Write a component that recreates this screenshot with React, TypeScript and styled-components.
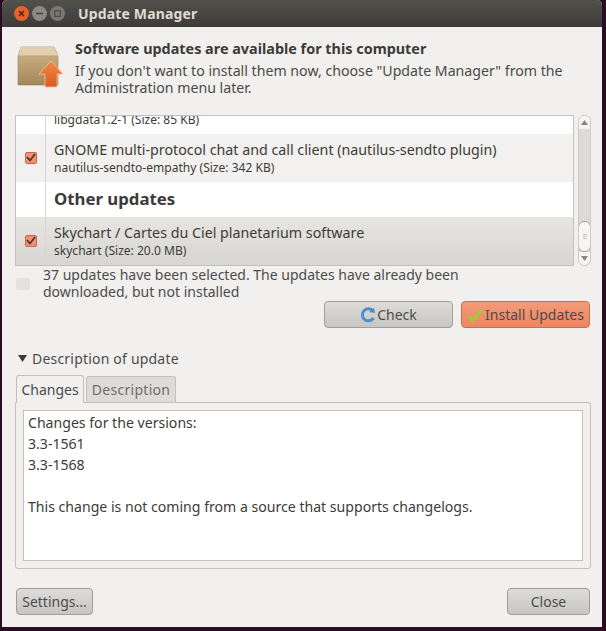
import React from "react";
import styled, { createGlobalStyle } from "styled-components";

const Global = createGlobalStyle`
  html, body { margin: 0; padding: 0; background: #2c0b25; }
  #root { width: 606px; height: 631px; }
  * { box-sizing: border-box; }
`;

const Desktop = styled.div`
  width: 606px; height: 631px; padding: 0 4px 4px 2px;
  background: #2c0b25;
  font-family: "Noto Sans", "Open Sans", sans-serif;
  font-size: 14px; color: #4c4c4c;
`;
const Frame = styled.div`
  height: 627px; display: flex; flex-direction: column;
  background: #f1f0ee; border-radius: 5px 5px 0 0; overflow: hidden;
`;
const TitleBar = styled.div`
  height: 27px; flex: none; display: flex; align-items: center; padding-left: 14px;
  background: linear-gradient(#51504b, #3d3c38);
  margin: 0 -2px;
`;
const Ctrl = styled.div<{ $c: string }>`
  width: 15px; height: 15px; border-radius: 50%; margin-right: 3px;
  background: ${(p) => p.$c}; display: flex; align-items: center; justify-content: center;
`;
const Title = styled.div`
  margin-left: 10px; font-size: 14px; font-weight: 700; color: #dfdbd2; letter-spacing: 0.15px;
`;
const Body = styled.div`
  flex: 1; display: flex; flex-direction: column; padding: 12px 11px 0 13px; min-height: 0;
`;
const Header = styled.div`
  display: flex; height: 76px; flex: none;
`;
const HeaderIcon = styled.div`
  width: 60px; flex: none; padding-top: 5px;
`;
const HeaderText = styled.div`
  font-size: 14.17px; line-height: 17px; color: #4a4a46;
`;
const Strong = styled.div`
  font-size: 14.4px; font-weight: 700; line-height: 20px; margin-bottom: 3px; color: #3c3b37;
`;
const ListRow = styled.div`
  display: flex; height: 151px; flex: none; gap: 2px;
`;
const List = styled.div`
  width: 563px; height: 151px; background: #fff; border: 1px solid #c4c0bb; overflow: hidden;
  display: flex; flex-direction: column;
`;
const Row = styled.div<{ $h: number; $bg: string }>`
  height: ${(p) => p.$h}px; flex: none; display: flex; background: ${(p) => p.$bg};
`;
const CheckCell = styled.div`
  width: 30px; flex: none; border-right: 1px solid #d8d6d2; display: flex; align-items: center; justify-content: center;
`;
const RowText = styled.div`
  padding-left: 8px; display: flex; flex-direction: column; justify-content: center;
  color: #4a4a4a;
`;
const ClippedText = styled(RowText)`
  justify-content: flex-end; margin-bottom: 6px;
`;
const Name = styled.div`
  font-size: 14.25px; line-height: 19px; color: #3c3b37;
`;
const Sub = styled.div`
  font-size: 12.05px; line-height: 17px; color: #3c3b37;
`;
const Section = styled.div`
  font-size: 16.8px; font-weight: 700; color: #3c3b37; line-height: 34px; margin-top: -1px;
`;
const Check = styled.div`
  width: 12px; height: 12px; background: #f09078; border: 1px solid #d0644a; border-radius: 2px; position: relative;
`;
const Scroll = styled.div`
  width: 13px; height: 151px; margin-left: 2px; border: 1px solid #cfccc7; border-radius: 6px; background: #dddbd8;
  display: flex; flex-direction: column; justify-content: space-between; overflow: hidden;
`;
const ScrollEnd = styled.div`
  height: 13px; background: #f5f4f2; display: flex; align-items: center; justify-content: center; flex: none;
`;
const Thumb = styled.div`
  height: 31px; margin-top: auto; background: #f6f5f3; border: 1px solid #a9a6a1; border-radius: 6px; margin-left: -1px; margin-right: -1px;
  display: flex; flex-direction: column; align-items: center; justify-content: center; gap: 1px;
`;
const Grip = styled.div`
  width: 4px; height: 1px; background: #c6c3be;
`;
const InfoRow = styled.div`
  display: flex; align-items: center; height: 34px; flex: none;
`;
const Spinner = styled.div`
  width: 14px; height: 12px; border-radius: 2px; background: #e3e2df; margin: 2px 13px 0 1px; flex: none;
`;
const InfoText = styled.div`
  font-size: 14px; line-height: 17px; color: #4c4c4c;
`;
const Actions = styled.div`
  display: flex; justify-content: flex-end; gap: 8px; margin-top: 1px; padding-right: 1px; flex: none;
`;
const Button = styled.div<{ $w: number; $accent?: boolean }>`
  width: ${(p) => p.$w}px; height: 27px; display: flex; align-items: center; justify-content: center; gap: 1px;
  border-radius: 4px; font-size: 14px;
  border: 1px solid ${(p) => (p.$accent ? "#cb7149" : "#a19e99")};
  color: #4c4c4c;
  background: ${(p) => (p.$accent ? "linear-gradient(#f49a78, #ee8660)" : "linear-gradient(#dddcd9, #c8c6c3)")};
`;
const Expander = styled.div`
  display: flex; align-items: center; gap: 5px; margin-top: 20px; height: 20px; font-size: 14px; letter-spacing: 0.2px; color: #4c4c4c; padding-left: 3px; flex: none;
`;
const Tabs = styled.div`
  display: flex; align-items: flex-end; height: 28px; margin-top: 6px; flex: none; position: relative; z-index: 1; padding-left: 1px;
`;
const Tab = styled.div<{ $active?: boolean }>`
  height: ${(p) => (p.$active ? 28 : 26)}px; padding: 0 4px; display: flex; align-items: center;
  font-size: 14px; border: 1px solid #c4c0bb; border-bottom: none; border-radius: 3px 3px 0 0;
  width: ${(p) => (p.$active ? 68 : 90)}px; margin-right: ${(p) => (p.$active ? 2 : 0)}px; justify-content: center;
  background: ${(p) => (p.$active ? "#f1f0ee" : "#dedcd9")};
  color: ${(p) => (p.$active ? "#4c4c4c" : "#6e6e6e")};
  letter-spacing: ${(p) => (p.$active ? 0 : 0.3)}px;
  margin-bottom: ${(p) => (p.$active ? -1 : 0)}px;
`;
const Notebook = styled.div`
  height: 167px; flex: none; border: 1px solid #c4c0bb; border-radius: 0 3px 3px 3px; padding: 7px;
`;
const TextArea = styled.div`
  height: 151px; background: #fff; border: 1px solid #c4c0bb; padding: 1px 4px;
  font-size: 14.1px; line-height: 21px; color: #3c3b37;
`;
const Footer = styled.div`
  display: flex; justify-content: space-between; margin-top: 19px; padding: 0 1px; flex: none;
`;

const BoxIcon = () => (
  <svg width="50" height="46" viewBox="0 0 50 46">
    <defs>
      <linearGradient id="bx" x1="0" y1="0" x2="0" y2="1">
        <stop offset="0" stopColor="#d2b78c" />
        <stop offset="1" stopColor="#a3875b" />
      </linearGradient>
      <linearGradient id="ar" x1="0" y1="0" x2="0" y2="1">
        <stop offset="0" stopColor="#f28a45" />
        <stop offset="1" stopColor="#dc5a1e" />
      </linearGradient>
    </defs>
    <path d="M6 3 L39 3 L43 12 L43 41 L3 41 L3 12 Z" fill="url(#bx)" stroke="#9c8258" strokeWidth="0.6" />
    <path d="M6 3 L39 3 L43 12 L3 12 Z" fill="#e2cfae" />
    <path d="M3 12 L43 12" stroke="#bda275" strokeWidth="1" />
    <path d="M36 17 L48 30 L42 30 L42 43 L30 43 L30 30 L24 30 Z" fill="url(#ar)" stroke="#f7c3a0" strokeWidth="0.8" />
  </svg>
);
const Tick = () => (
  <svg width="10" height="10" viewBox="0 0 10 10" style={{ position: "absolute", left: 0, top: 0 }}>
    <path d="M1 4 L4 7.5 L9 1" fill="none" stroke="#4a3524" strokeWidth="1.7" />
  </svg>
);
const Arrow = ({ up }: { up?: boolean }) => (
  <svg width="7" height="5" viewBox="0 0 7 5">
    <path d={up ? "M0 5 L3.5 0 L7 5 Z" : "M0 0 L7 0 L3.5 5 Z"} fill="#8a8781" />
  </svg>
);

export default function App() {
  return (
    <Desktop>
      <Global />
      <Frame>
        <TitleBar>
          <Ctrl $c="#e6612c">
            <svg width="7" height="7" viewBox="0 0 7 7"><path d="M1 1 L6 6 M6 1 L1 6" stroke="#4a2010" strokeWidth="1.4" /></svg>
          </Ctrl>
          <Ctrl $c="#8a8983">
            <svg width="7" height="3" viewBox="0 0 7 3"><path d="M0 1.5 L7 1.5" stroke="#44433f" strokeWidth="1.4" /></svg>
          </Ctrl>
          <Ctrl $c="#797873">
            <svg width="7" height="7" viewBox="0 0 7 7"><rect x="0.7" y="0.7" width="5.6" height="5.6" fill="none" stroke="#4a4945" strokeWidth="1.2" /></svg>
          </Ctrl>
          <Title>Update Manager</Title>
        </TitleBar>
        <Body>
          <Header>
            <HeaderIcon><BoxIcon /></HeaderIcon>
            <HeaderText>
              <Strong>Software updates are available for this computer</Strong>
              If you don't want to install them now, choose "Update Manager" from the
              <br />Administration menu later.
            </HeaderText>
          </Header>
          <ListRow>
            <List>
              <Row $h={18} $bg="#fff">
                <CheckCell />
                <ClippedText><Sub>libgdata1.2-1 (Size: 85 KB)</Sub></ClippedText>
              </Row>
              <Row $h={48} $bg="#f2f1ef">
                <CheckCell><Check><Tick /></Check></CheckCell>
                <RowText>
                  <Name>GNOME multi-protocol chat and call client (nautilus-sendto plugin)</Name>
                  <Sub>nautilus-sendto-empathy (Size: 342 KB)</Sub>
                </RowText>
              </Row>
              <Row $h={35} $bg="#fff">
                <CheckCell />
                <RowText><Section>Other updates</Section></RowText>
              </Row>
              <Row $h={48} $bg="linear-gradient(#e7e5e2, #d8d6d2)">
                <CheckCell><Check><Tick /></Check></CheckCell>
                <RowText>
                  <Name>Skychart / Cartes du Ciel planetarium software</Name>
                  <Sub>skychart (Size: 20.0 MB)</Sub>
                </RowText>
              </Row>
            </List>
            <Scroll>
              <ScrollEnd><Arrow up /></ScrollEnd>
              <Thumb><Grip /><Grip /><Grip /></Thumb>
              <ScrollEnd><Arrow /></ScrollEnd>
            </Scroll>
          </ListRow>
          <InfoRow>
            <Spinner />
            <InfoText>
              37 updates have been selected. The updates have already been
              <br />downloaded, but not installed
            </InfoText>
          </InfoRow>
          <Actions>
            <Button $w={129}>
              <svg width="16" height="16" viewBox="0 0 16 16">
                <path d="M13 4 A6 6 0 1 0 13.5 11" fill="none" stroke="#4a8fd0" strokeWidth="3" />
                <path d="M9 5 L15 6 L14 1 Z" fill="#4a8fd0" />
              </svg>
              Check
            </Button>
            <Button $w={129} $accent>
              <svg width="17" height="16" viewBox="0 0 17 16">
                <path d="M2 9 L6 14 L15 2" fill="none" stroke="#9ccb3c" strokeWidth="3" />
              </svg>
              Install Updates
            </Button>
          </Actions>
          <Expander>
            <svg width="9" height="9" viewBox="0 0 9 9"><path d="M0 1 L9 1 L4.5 8 Z" fill="#3c3b37" /></svg>
            Description of update
          </Expander>
          <Tabs>
            <Tab $active>Changes</Tab>
            <Tab>Description</Tab>
          </Tabs>
          <Notebook>
            <TextArea>
              Changes for the versions:
              <br />3.3-1561
              <br />3.3-1568
              <br />
              <br />This change is not coming from a source that supports changelogs.
            </TextArea>
          </Notebook>
          <Footer>
            <Button $w={77}>Settings...</Button>
            <Button $w={83}>Close</Button>
          </Footer>
        </Body>
      </Frame>
    </Desktop>
  );
}
